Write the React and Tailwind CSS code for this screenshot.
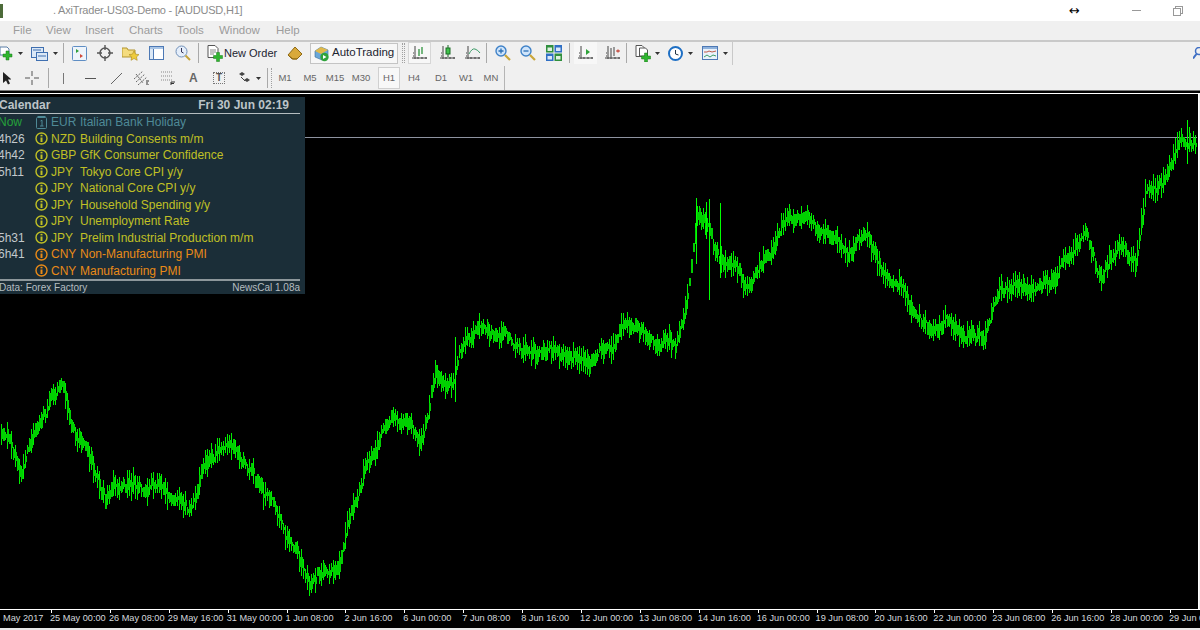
import React from "react";

const FONT_UI = "font-['Liberation_Sans',Arial,sans-serif]";
const FONT_ARIAL = "font-['Liberation_Sans',Arial,sans-serif]";

// rough shape of the price line, x / y in chart pixels
const KEY_POINTS = [
  [0, 335], [10, 340], [20, 382], [30, 345], [45, 325], [52, 300], [62, 293], [70, 325], [85, 355], [105, 408],
  [120, 385], [140, 392], [165, 398], [190, 412], [205, 372], [220, 358], [235, 350], [245, 368], [260, 392],
  [280, 430], [295, 455], [310, 485], [325, 482], [340, 470], [350, 415], [365, 375], [385, 335], [405, 322],
  [420, 345], [435, 287], [452, 292], [462, 250], [475, 228], [490, 240], [520, 252], [545, 258], [565, 265],
  [590, 262], [615, 252], [632, 225], [650, 245], [675, 255], [688, 200], [697, 118], [706, 120], [716, 165],
  [730, 172], [745, 192], [770, 155], [790, 125], [810, 122], [830, 145], [850, 165], [865, 132], [880, 175],
  [900, 200], [925, 230], [945, 228], [965, 248], [985, 235], [1000, 195], [1020, 198], [1040, 190], [1065, 172],
  [1085, 138], [1100, 178], [1120, 152], [1135, 178], [1145, 95], [1160, 90], [1175, 55], [1190, 50], [1200, 50],
];

const priceAt = (x) => {
  for (let i = 1; i < KEY_POINTS.length; i++) {
    const [x0, y0] = KEY_POINTS[i - 1];
    const [x1, y1] = KEY_POINTS[i];
    if (x <= x1) return y0 + ((y1 - y0) * (x - x0)) / (x1 - x0);
  }
  return 50;
};

const rand = (n) => {
  const v = Math.sin(n * 12.9898) * 43758.5453;
  return v - Math.floor(v);
};

const BARS = [];
for (let x = 1; x < 1197; x += 2) {
  const drift = Math.sin(x / 3.7) * 3 + Math.sin(x / 9.1) * 4;
  const mid = priceAt(x) + drift + (rand(x) - 0.5) * 8;
  const wick = 4 + rand(x + 0.5) * 10;
  const body = 1.5 + rand(x + 0.25) * 6;
  BARS.push({ x, mid, wick, body });
}

const SPIKES = [
  [696, 104, 170], [709, 105, 206], [720, 109, 184], [706, 108, 145], [455, 243, 308], [1187, 26, 70],
];

const CALENDAR = [
  { t: "Now", cur: "EUR", name: "Italian Bank Holiday", tone: "holiday" },
  { t: "4h26", cur: "NZD", name: "Building Consents m/m", tone: "low" },
  { t: "4h42", cur: "GBP", name: "GfK Consumer Confidence", tone: "low" },
  { t: "5h11", cur: "JPY", name: "Tokyo Core CPI y/y", tone: "low" },
  { t: "", cur: "JPY", name: "National Core CPI y/y", tone: "low" },
  { t: "", cur: "JPY", name: "Household Spending y/y", tone: "low" },
  { t: "", cur: "JPY", name: "Unemployment Rate", tone: "low" },
  { t: "5h31", cur: "JPY", name: "Prelim Industrial Production m/m", tone: "low" },
  { t: "6h41", cur: "CNY", name: "Non-Manufacturing PMI", tone: "mid" },
  { t: "", cur: "CNY", name: "Manufacturing PMI", tone: "mid" },
];

const TONES = {
  holiday: "text-[#4f8a97]",
  low: "text-[#c0c025]",
  mid: "text-[#e98a17]",
};

const AXIS_LABELS = [
  "25 May 00:00", "26 May 08:00", "29 May 16:00", "31 May 00:00", "1 Jun 08:00", "2 Jun 16:00", "6 Jun 00:00",
  "7 Jun 08:00", "8 Jun 16:00", "12 Jun 00:00", "13 Jun 08:00", "14 Jun 16:00", "16 Jun 00:00", "19 Jun 08:00",
  "20 Jun 16:00", "22 Jun 00:00", "23 Jun 08:00", "26 Jun 16:00", "28 Jun 00:00", "29 Jun 00:00",
];

const Ico = ({ w = 16, h = 16, className = "", children }) => (
  <svg width={w} height={h} viewBox={`0 0 ${w} ${h}`} className={`shrink-0 ${className}`}>
    {children}
  </svg>
);

const Caret = ({ className = "" }) => (
  <Ico w={5} h={3} className={className}>
    <path d="M0 0h5L2.5 3z" fill="#333" />
  </Ico>
);

const GreenPlus = ({ x = 0, y = 0 }) => (
  <path
    d={`M${x + 3} ${y}h3v3h3v3h-3v3h-3v-3h-3v-3h3z`}
    fill="#2fb52f"
    stroke="#1a7a1a"
    strokeWidth=".5"
  />
);

const Sep = ({ className = "" }) => <div className={`w-px h-[20px] bg-[#a9a9a9] shrink-0 ${className}`} />;

const ChartAxes = ({ children }) => (
  <Ico w={16} h={16}>
    <path d="M3 1v13M0 13h15" stroke="#444" strokeWidth="1" fill="none" />
    <path d="M1 11h1M1 8h1M6 12v2M10 12v2M14 12v2" stroke="#444" strokeWidth="1" />
    {children}
  </Ico>
);

const Toolbar1 = () => (
  <div className="h-[24px] pb-[2px] flex items-center shrink-0">
    <Ico w={13} h={15}>
      <path d="M0 1h7l2 2v6H0z" fill="#fff" stroke="#5b7fa8" />
      <GreenPlus x={3} y={5} />
    </Ico>
    <Caret className="ml-[5px]" />
    <Ico w={17} h={15} className="ml-[8px]">
      <rect x=".5" y="1.5" width="12" height="10" fill="#dbe8f6" stroke="#3f6fb0" />
      <rect x="5.5" y="6.5" width="11" height="8" fill="#dbe8f6" stroke="#3f6fb0" />
      <path d="M2 4h8M7 10h8" stroke="#3f6fb0" />
    </Ico>
    <Caret className="ml-[5px]" />
    <Sep className="ml-[5px]" />
    <Ico w={15} h={15} className="ml-[8px]">
      <rect x=".5" y=".5" width="14" height="14" rx="1" fill="#eef4fb" stroke="#5f8ec4" />
      <path d="M4 3l3 2-3 2z" fill="#2f9e3a" />
      <path d="M8 8l3 2-3 2z" fill="#d04a3a" />
    </Ico>
    <Ico w={16} h={16} className="ml-[10px]">
      <circle cx="8" cy="8" r="5" fill="none" stroke="#555" strokeWidth="1.4" />
      <path d="M8 0v5M8 11v5M0 8h5M11 8h5" stroke="#555" strokeWidth="1.4" />
    </Ico>
    <Ico w={18} h={16} className="ml-[9px]">
      <path d="M0 3h5l1 2h7v7H0z" fill="#f4dc7f" stroke="#b3952f" />
      <path d="M12 6l1.6 3.2 3.4.4-2.5 2.3.7 3.4-3.2-1.8-3 1.8.6-3.4L7 9.6l3.4-.4z" fill="#eecb3b" stroke="#a98a1d" strokeWidth=".6" />
    </Ico>
    <Ico w={15} h={14} className="ml-[9px]">
      <rect x=".5" y=".5" width="14" height="13" fill="#fff" stroke="#4d79b5" />
      <rect x="1" y="1" width="13" height="2" fill="#a9c5e6" />
      <path d="M4.5 3v10" stroke="#4d79b5" />
      <rect x="1" y="3" width="3" height="10" fill="#dbe8f6" />
    </Ico>
    <Ico w={16} h={16} className="ml-[11px]">
      <circle cx="6.5" cy="6.5" r="5.5" fill="#e5eefa" stroke="#6f8fb8" />
      <path d="M6.5 3v4l2 1" stroke="#335" fill="none" />
      <path d="M10.5 10.5l4.5 4.5" stroke="#c4a33c" strokeWidth="2" />
    </Ico>
    <Sep className="ml-[7px]" />
    <Ico w={16} h={17} className="ml-[8px]">
      <path d="M1 .5h7l3 3v9H1z" fill="#fff" stroke="#555" />
      <path d="M3 5h6M3 7h6M3 9h4" stroke="#888" />
      <GreenPlus x={6.5} y={7.5} />
    </Ico>
    <span className={`${FONT_UI} ml-[1px] text-[11px] text-[#1c2430] whitespace-nowrap w-[56px]`}>New Order</span>
    <Ico w={16} h={14} className="ml-[7px]">
      <path d="M1 9l7-8 7 7-5 5H5z" fill="#d9a93a" stroke="#8f6a15" />
      <path d="M1 9l5 4h4" fill="none" stroke="#8f6a15" />
    </Ico>
    <div className="ml-[7px] w-[88px] h-[21px] flex items-center bg-[#f7f7f7] border border-[#c4c4c4] pl-[2px] shrink-0">
      <Ico w={17} h={17}>
        <path d="M2 6l6-4 7 3v5l-6 5-7-3z" fill="#6aa7d8" stroke="#3b6d98" strokeWidth=".6" />
        <path d="M2 6l6 3 7-4-7-3z" fill="#e0b94a" />
        <circle cx="11.5" cy="12" r="4.2" fill="#2fa33a" />
        <path d="M10 10l3.5 2-3.5 2z" fill="#fff" />
      </Ico>
      <span className={`${FONT_UI} ml-[2px] text-[11.5px] text-[#1c2430] whitespace-nowrap`}>AutoTrading</span>
    </div>
    <div className="ml-[4px] w-[3px] h-[20px] border-x border-dotted border-[#a0a0a0] shrink-0" />
    <div className="ml-[3px] w-[23px] h-[22px] flex items-center justify-center bg-[#f7f7f7] border border-[#d6d6d6] shrink-0">
      <ChartAxes>
        <path d="M7 4v7M10 2v7" stroke="#1d8a2d" strokeWidth="1.2" />
      </ChartAxes>
    </div>
    <div className="ml-[9px]">
      <ChartAxes>
        <rect x="6" y="3" width="4" height="6" fill="#3fc24a" stroke="#1a6a25" />
        <path d="M8 0v3M8 9v3" stroke="#1a6a25" />
      </ChartAxes>
    </div>
    <div className="ml-[9px]">
      <ChartAxes>
        <path d="M4 9q3-6 6-5t5 4" stroke="#3d9c68" fill="none" />
      </ChartAxes>
    </div>
    <Sep className="ml-[5px]" />
    <Ico w={16} h={16} className="ml-[8px]">
      <circle cx="6" cy="6" r="5" fill="#cfe4fa" stroke="#3f82c8" strokeWidth="1.4" />
      <path d="M3.5 6h5M6 3.5v5" stroke="#2a6fb5" strokeWidth="1.3" />
      <path d="M10 10l5 5" stroke="#c9a63a" strokeWidth="2.2" />
    </Ico>
    <Ico w={16} h={16} className="ml-[9px]">
      <circle cx="6" cy="6" r="5" fill="#cfe4fa" stroke="#3f82c8" strokeWidth="1.4" />
      <path d="M3.5 6h5" stroke="#2a6fb5" strokeWidth="1.3" />
      <path d="M10 10l5 5" stroke="#c9a63a" strokeWidth="2.2" />
    </Ico>
    <Ico w={16} h={16} className="ml-[10px]">
      <rect width="7.5" height="7.5" fill="#2f8f3d" />
      <rect x="8.5" width="7.5" height="7.5" fill="#2f6fc4" />
      <rect y="8.5" width="7.5" height="7.5" fill="#2f6fc4" />
      <rect x="8.5" y="8.5" width="7.5" height="7.5" fill="#2f8f3d" />
      <rect x="1.5" y="2.5" width="4.5" height="3.5" fill="#dff0e0" />
      <rect x="10" y="2.5" width="4.5" height="3.5" fill="#dbe8f8" />
      <rect x="1.5" y="11" width="4.5" height="3.5" fill="#dbe8f8" />
      <rect x="10" y="11" width="4.5" height="3.5" fill="#dff0e0" />
    </Ico>
    <Sep className="ml-[7px]" />
    <div className="ml-[4px] w-[23px] h-[22px] flex items-center justify-center bg-[#f7f7f7] shrink-0">
      <ChartAxes>
        <path d="M8 4l4 3-4 3z" fill="#2fa33a" />
      </ChartAxes>
    </div>
    <div className="ml-[8px]">
      <ChartAxes>
        <path d="M6 3v9M9 2v9" stroke="#444" />
        <path d="M11 6h4M13 4.5v3" stroke="#c0392b" strokeWidth="1.2" />
      </ChartAxes>
    </div>
    <Sep className="ml-[5px]" />
    <Ico w={16} h={17} className="ml-[8px]">
      <path d="M1 .5h6l2 2v9H1z" fill="#fff" stroke="#555" />
      <path d="M4.5 3h6l2 2v6h-8z" fill="#fff" stroke="#555" />
      <GreenPlus x={6.5} y={8} />
    </Ico>
    <Caret className="ml-[4px]" />
    <Ico w={15} h={15} className="ml-[8px]">
      <circle cx="7.5" cy="7.5" r="6.5" fill="#fff" stroke="#1e6fc4" strokeWidth="2" />
      <path d="M7.5 4v4l3 1" stroke="#234" fill="none" />
    </Ico>
    <Caret className="ml-[5px]" />
    <Ico w={16} h={14} className="ml-[9px]">
      <rect x=".5" y=".5" width="15" height="13" fill="#eaf2fb" stroke="#4d79b5" />
      <rect x="1" y="1" width="14" height="2" fill="#8fb2dc" />
      <path d="M2 6h3l2-1 3 1 4-1" stroke="#c05a4a" fill="none" />
      <path d="M2 11l3-2 3 2 3-2 3 1" stroke="#3d9c68" fill="none" />
    </Ico>
    <Caret className="ml-[5px]" />
    <div className="ml-[4px] w-px h-[24px] bg-[#c9c9c9] shrink-0" />
    <div className="flex-1" />
    <Ico w={7} h={12}>
      <circle cx="6" cy="4" r="3.5" fill="none" stroke="#3f6fc4" strokeWidth="1.5" />
      <path d="M3.5 7L0 11.5" stroke="#3f6fc4" strokeWidth="2" />
    </Ico>
  </div>
);

const TF = ({ label, className = "", active = false }) => (
  <span
    className={`${FONT_ARIAL} text-[9.5px] text-[#666] flex items-center justify-center shrink-0 h-[22px] ${
      active ? "bg-[#f8f8f8] border border-[#d0d0d0]" : ""
    } ${className}`}
  >
    {label}
  </span>
);

const Toolbar2 = () => (
  <div className="h-[24px] flex items-center shrink-0">
    <Ico w={9} h={13} className="ml-[2px]">
      <path d="M1 0v11l3-2.5 2 4 2-1-2-4h3.5z" fill="#222" />
    </Ico>
    <Ico w={14} h={14} className="ml-[14px]">
      <path d="M7 0v5M7 9v5M0 7h5M9 7h5" stroke="#555" />
    </Ico>
    <Sep className="ml-[9px]" />
    <div className="ml-[14px] w-px h-[11px] bg-[#777] shrink-0" />
    <div className="ml-[21px] w-[11px] h-px bg-[#555] shrink-0" />
    <Ico w={11} h={11} className="ml-[15px]">
      <path d="M0 11L11 0" stroke="#666" />
    </Ico>
    <Ico w={15} h={14} className="ml-[12px]">
      <path d="M0 8L9 0M2 11l9-8M4 14l9-8M2 3l7 9" stroke="#666" strokeDasharray="2 1" fill="none" />
      <path d="M12 10h3M12 12h2M12 14h3" stroke="#333" />
    </Ico>
    <Ico w={14} h={14} className="ml-[12px]">
      <path d="M0 1h12M0 5h12M0 9h12" stroke="#888" strokeDasharray="1 1" />
      <path d="M10 11h4M10 11v3M10 12.5h3" stroke="#333" />
    </Ico>
    <span className={`${FONT_ARIAL} ml-[14px] text-[12px] font-bold text-[#666] w-[10px] shrink-0`}>A</span>
    <div className="ml-[14px] w-[12px] h-[12px] border border-dotted border-[#777] flex items-center justify-center shrink-0">
      <span className={`${FONT_ARIAL} text-[10px] font-bold text-[#555] leading-none`}>T</span>
    </div>
    <Ico w={11} h={12} className="ml-[14px]">
      <path d="M0 2l3-2 3 2-3 2z" fill="#444" />
      <path d="M5 8l3-2 3 2-3 2z" fill="#444" />
      <path d="M2 5l4 4" stroke="#444" />
    </Ico>
    <Caret className="ml-[6px]" />
    <Sep className="ml-[6px]" />
    <div className="ml-[3px] w-[2px] h-[20px] border-l border-dotted border-[#a0a0a0] shrink-0" />
    <TF label="M1" className="ml-[4px] w-[16px]" />
    <TF label="M5" className="ml-[9px] w-[16px]" />
    <TF label="M15" className="ml-[8px] w-[18px]" />
    <TF label="M30" className="ml-[7px] w-[20px]" />
    <TF label="H1" className="ml-[7px] w-[22px]" active />
    <TF label="H4" className="ml-[6px] w-[16px]" />
    <TF label="D1" className="ml-[11px] w-[16px]" />
    <TF label="W1" className="ml-[9px] w-[16px]" />
    <TF label="MN" className="ml-[9px] w-[16px]" />
    <div className="ml-[5px] w-px h-[24px] bg-[#b5b5b5] shrink-0" />
  </div>
);

const InfoIcon = ({ color }) => (
  <Ico w={13} h={13}>
    <circle cx="6.5" cy="6.5" r="5.5" fill="none" stroke={color} strokeWidth="1.4" />
    <rect x="5.5" y="5.5" width="2" height="4.5" fill={color} />
    <rect x="5.5" y="2.8" width="2" height="1.6" fill={color} />
  </Ico>
);

const HolidayIcon = () => (
  <Ico w={13} h={13}>
    <rect x="1.5" y="1.5" width="10" height="11" rx="1" fill="none" stroke="#4f8a97" />
    <path d="M2.5 .5h8" stroke="#4f8a97" />
    <path d="M5.5 5l1.5-.8V10M5 10h3.5" stroke="#4f8a97" fill="none" />
  </Ico>
);

const Calendar = () => (
  <div className={`${FONT_ARIAL} absolute left-0 top-[3px] w-[305px] h-[197px] bg-[#1b2e38] overflow-hidden`}>
    <div className="ml-[-1px] mr-[5px] h-[17px] flex items-center justify-between border-b border-[#b5bdc0] text-[12px] font-bold text-[#bcc4c8]">
      <span>Calendar</span>
      <span className="mr-[11px]">Fri 30 Jun 02:19</span>
    </div>
    <div className="flex flex-col h-[165px]">
      {CALENDAR.map((row, i) => (
        <div key={i} className="h-[16.6px] flex items-center text-[12px] leading-none whitespace-nowrap">
          <span className={`w-[37px] ml-[-2px] shrink-0 ${row.t === "Now" ? "text-[#25a13a]" : "text-[#c3c9cc]"}`}>{row.t}</span>
          {row.tone === "holiday" ? (
            <HolidayIcon />
          ) : (
            <InfoIcon color={row.tone === "mid" ? "#e98a17" : "#c0c025"} />
          )}
          <span className={`ml-[3px] w-[29px] shrink-0 ${TONES[row.tone]}`}>{row.cur}</span>
          <span className={TONES[row.tone]}>{row.name}</span>
        </div>
      ))}
    </div>
    <div className="ml-[-1px] mr-[5px] h-[14px] flex items-center justify-between border-t-2 border-[#8d979b] text-[10px] text-[#b5bdc0]">
      <span>Data: Forex Factory</span>
      <span>NewsCal 1.08a</span>
    </div>
  </div>
);

const PriceChart = () => (
  <svg width="1197" height="515" viewBox="0 0 1197 515" className="block" shapeRendering="crispEdges">
    <path d="M0 43.5H1197" stroke="#8e93a0" strokeWidth="1" />
    {BARS.map((b) => (
      <path key={`w${b.x}`} d={`M${b.x + 0.5} ${b.mid - b.wick}V${b.mid + b.wick}`} stroke="#00f000" strokeWidth="1" />
    ))}
    {BARS.map((b) => (
      <path key={`b${b.x}`} d={`M${b.x + 1} ${b.mid - b.body}V${b.mid + b.body}`} stroke="#00d000" strokeWidth="2" />
    ))}
    {SPIKES.map(([x, y0, y1]) => (
      <path key={x} d={`M${x + 0.5} ${y0}V${y1}`} stroke="#00ff00" strokeWidth="1" />
    ))}
  </svg>
);

const App = () => (
  <div className="w-[1200px] h-[630px] overflow-hidden flex flex-col bg-[#f0f0f0]">
    {/* Title bar */}
    <div className="h-[21px] bg-white flex items-center shrink-0">
      <div className="w-[3px] h-[14px] bg-[#4d6b3a] shrink-0" />
      <span className={`${FONT_UI} ml-[50px] text-[11px] tracking-[-0.2px] text-[#8b8b8b] whitespace-nowrap`}>. AxiTrader-US03-Demo - [AUDUSD,H1]</span>
      <div className="flex-1" />
      <span className="text-[13px] leading-none text-black mr-[52px] font-['DejaVu_Sans',sans-serif]">↔</span>
      <div className="w-[9px] h-px bg-[#999] mr-[32px] shrink-0" />
      <Ico w={10} h={10} className="mr-[17px]">
        <rect x="2.5" y=".5" width="7" height="7" fill="none" stroke="#999" />
        <rect x=".5" y="2.5" width="7" height="7" fill="#fff" stroke="#999" />
      </Ico>
    </div>

    {/* Menu */}
    <div className={`${FONT_UI} h-[19px] flex items-center text-[11.5px] text-[#9c9c9c] shrink-0`}>
      <span className="ml-[13px] w-[33px]">File</span>
      <span className="w-[39px]">View</span>
      <span className="w-[44px]">Insert</span>
      <span className="w-[48px]">Charts</span>
      <span className="w-[42px]">Tools</span>
      <span className="w-[57px]">Window</span>
      <span>Help</span>
    </div>
    <div className="h-[2px] bg-[#c9c9c9] shrink-0" />

    <Toolbar1 />
    <Toolbar2 />

    <div className="h-px bg-[#777] shrink-0" />
    <div className="h-[2px] bg-black shrink-0" />

    {/* Chart */}
    <div className="h-px bg-white shrink-0" />
    <div className="relative h-[515px] bg-black border-r border-white mr-px shrink-0">
      <PriceChart />
      <Calendar />
    </div>
    <div className="h-px bg-white shrink-0" />

    {/* Time axis */}
    <div className={`${FONT_ARIAL} h-[18px] bg-black flex text-[9.2px] text-[#d5d9de] whitespace-nowrap shrink-0 overflow-hidden`}>
      <div className="w-[50px] pl-[3px] pt-[2px] shrink-0">May 2017</div>
      {AXIS_LABELS.map((label) => (
        <div key={label} className="relative w-[58.9px] pt-[2px] shrink-0">
          <div className="absolute left-px top-0 w-px h-[3px] bg-white" />
          {label}
        </div>
      ))}
    </div>
    <div className="flex-1 bg-[#e8e8e8]" />
  </div>
);

export default App;
